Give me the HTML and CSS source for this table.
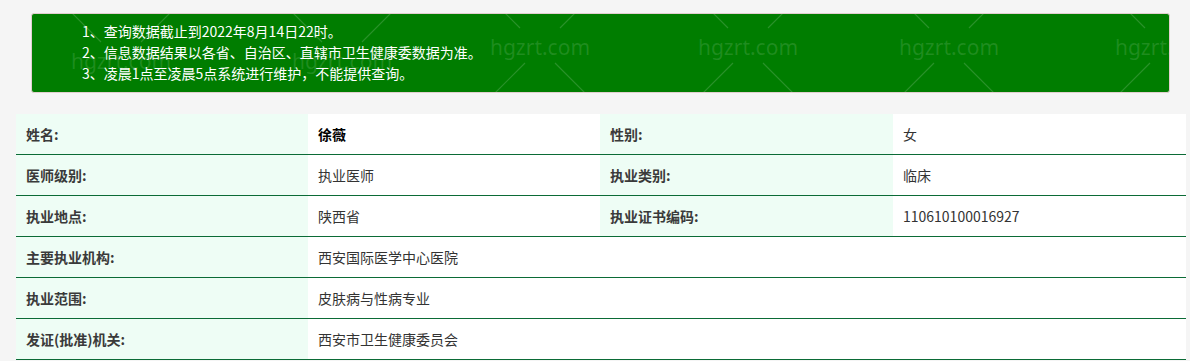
FILE: index.html
```html
<!DOCTYPE html>
<html lang="zh-CN">
<head>
<meta charset="utf-8">
<title>医师信息查询</title>
<link rel="stylesheet" href="styles.css">
</head>
<body>
<div class="page">
  <div class="notice">
    <svg class="watermark" width="1139" height="80" viewBox="0 0 1139 80" aria-hidden="true">
      <g class="wm-lines">
        <path d="M25 -16 L70 29 M108 84 L155 131 M155 -16 L110 29 M72 84 L25 131"/>
        <path d="M246 -16 L291 29 M329 84 L376 131 M376 -16 L331 29 M293 84 L246 131"/>
        <path d="M444 -30 L489 15 M524 50 L571 97 M574 -30 L529 15 M494 50 L447 97"/>
        <path d="M652 -30 L697 15 M732 50 L779 97 M782 -30 L737 15 M702 50 L655 97"/>
        <path d="M853 -30 L898 15 M933 50 L980 97 M983 -30 L938 15 M903 50 L856 97"/>
        <path d="M1069 -30 L1114 15 M1149 50 L1196 97 M1199 -30 L1154 15 M1119 50 L1072 97"/>
      </g>
      <g class="wm-text">
        <text x="90" y="56">hgzrt.com</text>
        <text x="311" y="56">hgzrt.com</text>
        <text x="509" y="42">hgzrt.com</text>
        <text x="717" y="42">hgzrt.com</text>
        <text x="918" y="42">hgzrt.com</text>
        <text x="1134" y="42">hgzrt.com</text>
      </g>
    </svg>
    <p class="notice-line">1、查询数据截止到2022年8月14日22时。</p>
    <p class="notice-line">2、信息数据结果以各省、自治区、直辖市卫生健康委数据为准。</p>
    <p class="notice-line">3、凌晨1点至凌晨5点系统进行维护，不能提供查询。</p>
  </div>

  <table class="info">
    <colgroup>
      <col class="c1"><col class="c2"><col class="c3"><col class="c4">
    </colgroup>
    <tbody>
      <tr>
        <th>姓名:</th>
        <td class="strong">徐薇</td>
        <th>性别:</th>
        <td>女</td>
      </tr>
      <tr>
        <th>医师级别:</th>
        <td>执业医师</td>
        <th>执业类别:</th>
        <td>临床</td>
      </tr>
      <tr>
        <th>执业地点:</th>
        <td>陕西省</td>
        <th>执业证书编码:</th>
        <td>110610100016927</td>
      </tr>
      <tr>
        <th>主要执业机构:</th>
        <td colspan="3">西安国际医学中心医院</td>
      </tr>
      <tr>
        <th>执业范围:</th>
        <td colspan="3">皮肤病与性病专业</td>
      </tr>
      <tr>
        <th>发证(批准)机关:</th>
        <td colspan="3">西安市卫生健康委员会</td>
      </tr>
    </tbody>
  </table>
</div>
</body>
</html>
```

FILE: styles.css
```css
html, body {
  margin: 0;
  padding: 0;
  background: #f5f5f5;
}

body {
  font-family: "Noto Sans CJK SC", "Noto Sans", sans-serif;
  font-size: 14px;
  color: #333;
}

.page {
  width: 1170px;
  padding: 13px 0 0 16px;
}

.notice {
  position: relative;
  overflow: hidden;
  box-sizing: border-box;
  width: 1139px;
  height: 80px;
  margin: 0 0 21px 15px;
  padding: 7px 0 0 50px;
  background: #007d00;
  border: 1px solid #e2cfcf;
  border-radius: 3px;
  color: #fff;
}

.watermark {
  position: absolute;
  left: -1px;
  top: -1px;
  pointer-events: none;
}

.wm-lines path {
  stroke: rgba(255, 255, 255, 0.16);
  stroke-width: 1.2;
  fill: none;
}

.wm-text text {
  font-family: "Noto Sans", "Open Sans", sans-serif;
  font-size: 21px;
  fill: rgba(255, 255, 255, 0.13);
  text-anchor: middle;
}

.notice-line {
  position: relative;
  margin: 0;
  line-height: 21px;
  font-size: 14px;
}

.info {
  width: 1170px;
  border-collapse: collapse;
  table-layout: fixed;
  background: #fff;
}

.c1, .c2 { width: 292px; }
.c3, .c4 { width: 293px; }

.info th,
.info td {
  height: 40px;
  padding: 0 10px;
  border-bottom: 1px solid #0b6b36;
  text-align: left;
  vertical-align: middle;
  line-height: 20px;
  font-size: 14px;
}

.info th {
  background: #eefdf5;
  color: #3a3a3a;
  font-weight: bold;
}

.info td {
  background: #fff;
  color: #333;
  font-weight: normal;
}

.info td.strong {
  color: #000;
  font-weight: bold;
}
```
